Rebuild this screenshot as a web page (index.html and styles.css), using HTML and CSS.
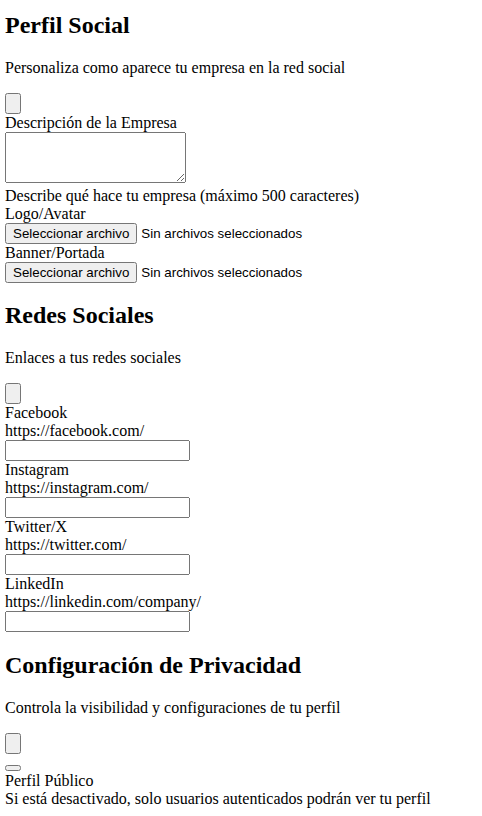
FILE: index.html
```html
<!DOCTYPE html>
<html lang="es">
<head>
<meta charset="utf-8">
<link rel="stylesheet" href="styles.css">
</head>
<body>
<div class="section">
<h2 class="first">Perfil Social</h2>
<p>Personaliza como aparece tu empresa en la red social</p>
<button class="btn-empty"></button>
<div><label>Descripción de la Empresa</label></div>
<textarea rows="3"></textarea>
<div>Describe qué hace tu empresa (máximo 500 caracteres)</div>
<div><label>Logo/Avatar</label></div>
<div class="file"><button class="file-btn">Seleccionar archivo</button><span class="file-name">Sin archivos seleccionados</span></div>
<div><label>Banner/Portada</label></div>
<div class="file"><button class="file-btn">Seleccionar archivo</button><span class="file-name">Sin archivos seleccionados</span></div>
</div>
<div class="section second">
<h2>Redes Sociales</h2>
<p>Enlaces a tus redes sociales</p>
<button class="btn-empty"></button>
<div>Facebook</div>
<div>https://facebook.com/</div>
<input type="text">
<div>Instagram</div>
<div>https://instagram.com/</div>
<input type="text">
<div>Twitter/X</div>
<div>https://twitter.com/</div>
<input type="text">
<div>LinkedIn</div>
<div>https://linkedin.com/company/</div>
<input type="text">
</div>
<div class="section">
<h2>Configuración de Privacidad</h2>
<p>Controla la visibilidad y configuraciones de tu perfil</p>
<button class="btn-empty"></button>
<div><button class="toggle"></button></div>
<div>Perfil Público</div>
<div>Si está desactivado, solo usuarios autenticados podrán ver tu perfil</div>
</div>
</body>
</html>
```
FILE: styles.css
```css
body {
  margin: 0;
  padding: 0 5px;
  font-family: "Liberation Serif", serif;
}
.first { margin-top: 12px; }
.second { margin-top: -1px; }
input, button { font-family: "Liberation Sans", sans-serif; }
textarea { font-family: "Liberation Mono", monospace; }
.btn-empty {
  display: block;
  width: 16px;
  height: 21px;
}
.file { display: flex; align-items: center; }
.file-btn { margin-right: 4px; }
.file-name { font-family: "Liberation Sans", sans-serif; font-size: 13.333px; }
```
